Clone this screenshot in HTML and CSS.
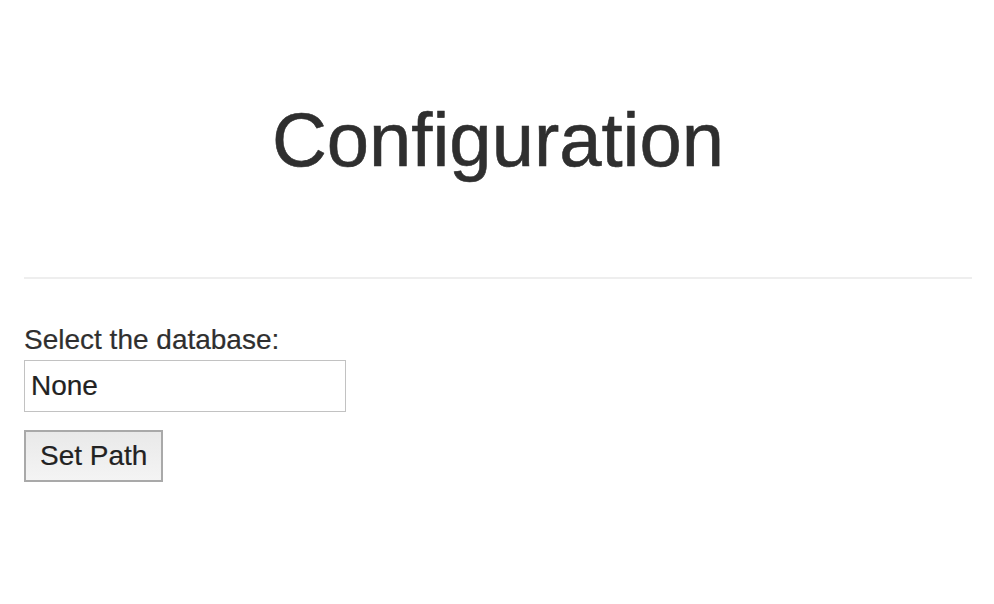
FILE: index.html
```html
<!DOCTYPE html>
<html>
<head>
<meta charset="utf-8">
<title>Configuration</title>
<link rel="stylesheet" href="styles.css">
</head>
<body>
<main class="page">
  <h1 class="title">Configuration</h1>
  <hr class="divider">
  <form class="config-form">
    <label class="field-label" for="db">Select the database:</label>
    <input class="field-input" id="db" type="text" value="None">
    <button class="btn" type="button">Set Path</button>
  </form>
</main>
</body>
</html>
```

FILE: styles.css
```css
html, body {
  margin: 0;
  padding: 0;
  background: #ffffff;
}

body {
  font-family: "Liberation Sans", Arial, Helvetica, sans-serif;
  color: #2f2f2f;
}

.page {
  padding: 0 22px 0 24px;
}

.title {
  margin: 98px 0 0;
  font-size: 76px;
  line-height: 1.1;
  font-weight: 400;
  text-align: center;
  color: #2f2f2f;
  -webkit-text-stroke: 0.6px #2f2f2f;
}

.divider {
  margin: 95px 0 0;
  height: 0;
  border: 0;
  border-top: 2px solid #eeeeee;
}

.config-form {
  display: flex;
  flex-direction: column;
  align-items: flex-start;
  padding-top: 44px;
}

.field-label {
  display: block;
  font-size: 28px;
  line-height: 33px;
  margin-bottom: 4px;
  -webkit-text-stroke: 0.2px #2f2f2f;
}

.field-input {
  box-sizing: border-box;
  width: 322px;
  height: 52px;
  margin: 0;
  padding: 0 6px;
  border: 1px solid #c2c2c2;
  border-radius: 0;
  font-family: inherit;
  font-size: 28px;
  color: #222222;
  background: #ffffff;
  outline: none;
  -webkit-text-stroke: 0.2px #222222;
}

.btn {
  box-sizing: border-box;
  margin-top: 18px;
  height: 52px;
  padding: 0 14px;
  border: 2px solid #a9a9a9;
  border-radius: 0;
  background: linear-gradient(#e9e9e9, #f4f4f4);
  font-family: inherit;
  font-size: 28px;
  color: #222222;
  cursor: pointer;
  -webkit-text-stroke: 0.2px #222222;
}
```
